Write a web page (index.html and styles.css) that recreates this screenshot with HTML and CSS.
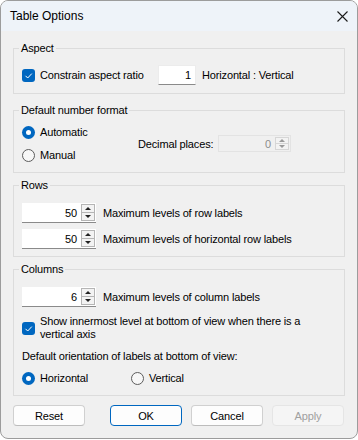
FILE: index.html
```html
<!DOCTYPE html>
<html lang="en">
<head>
    <meta charset="UTF-8">
    <title>Table Options</title>
    <link rel="stylesheet" href="styles.css">
</head>
<body>
    <div class="window">
        <div class="titlebar">
            <span class="title">Table Options</span>
            <svg class="close" width="11" height="11" viewBox="0 0 11 11">
                <path d="M0.5 0.5 L10.5 10.5 M10.5 0.5 L0.5 10.5" stroke="#1b1b1b" stroke-width="1.1" fill="none"/>
            </svg>
        </div>

        <div class="content">
            <!-- Aspect -->
            <fieldset class="group aspect">
                <legend>Aspect</legend>
                <div class="aspect-row">
                    <label class="check ratio-check">
                        <span class="box"><svg width="13" height="13" viewBox="0 0 13 13"><path d="M3.5 6.8 L5.7 9 L9.8 4.6" stroke="#fff" stroke-width="1" fill="none"/></svg></span>
                        Constrain aspect ratio
                    </label>
                    <span class="field ratio">1</span>
                    <span class="after">Horizontal : Vertical</span>
                </div>
            </fieldset>

            <!-- Default number format -->
            <fieldset class="group format">
                <legend>Default number format</legend>
                <div class="format-body">
                    <div class="radios">
                        <label class="radio"><span class="dot on"></span>Automatic</label>
                        <label class="radio"><span class="dot"></span>Manual</label>
                    </div>
                    <div class="decimal">
                        <span class="decimal-label">Decimal places:</span>
                        <span class="spin disabled">
                            <span class="value">0</span>
                            <span class="spinner">
                                <span class="arrow up"></span>
                                <span class="arrow down"></span>
                            </span>
                        </span>
                    </div>
                </div>
            </fieldset>

            <!-- Rows -->
            <fieldset class="group rows">
                <legend>Rows</legend>
                <div class="stack">
                    <div class="spin-row">
                        <span class="spin">
                            <span class="value">50</span>
                            <span class="spinner">
                                <span class="arrow up"></span>
                                <span class="arrow down"></span>
                            </span>
                        </span>
                        <span class="after">Maximum levels of row labels</span>
                    </div>
                    <div class="spin-row">
                        <span class="spin">
                            <span class="value">50</span>
                            <span class="spinner">
                                <span class="arrow up"></span>
                                <span class="arrow down"></span>
                            </span>
                        </span>
                        <span class="after">Maximum levels of horizontal row labels</span>
                    </div>
                </div>
            </fieldset>

            <!-- Columns -->
            <fieldset class="group columns">
                <legend>Columns</legend>
                <div class="spin-row">
                    <span class="spin">
                        <span class="value">6</span>
                        <span class="spinner">
                            <span class="arrow up"></span>
                            <span class="arrow down"></span>
                        </span>
                    </span>
                    <span class="after">Maximum levels of column labels</span>
                </div>
                <label class="check wrap-check">
                    <span class="box"><svg width="13" height="13" viewBox="0 0 13 13"><path d="M3.5 6.8 L5.7 9 L9.8 4.6" stroke="#fff" stroke-width="1" fill="none"/></svg></span>
                    <span class="wrap-text">Show innermost level at bottom of view when there is a<br>vertical axis</span>
                </label>
                <div class="orient-label">Default orientation of labels at bottom of view:</div>
                <div class="orient">
                    <label class="radio horiz"><span class="dot on"></span>Horizontal</label>
                    <label class="radio"><span class="dot"></span>Vertical</label>
                </div>
            </fieldset>

            <div class="buttons">
                <button class="btn">Reset</button>
                <span class="spacer"></span>
                <button class="btn default">OK</button>
                <button class="btn">Cancel</button>
                <button class="btn" disabled>Apply</button>
            </div>
        </div>
    </div>
</body>
</html>
```

FILE: styles.css
```css
body {
    margin: 0;
    background: #ffffff;
    font-family: "Liberation Sans", Arial, sans-serif;
    font-size: 11px;
    letter-spacing: -0.15px;
    color: #000;
}

.window {
    width: 358px;
    height: 439px;
    box-sizing: border-box;
    border: 1px solid #9c9c9c;
    border-radius: 8px;
    overflow: hidden;
    background: #f0f0f0;
}

.titlebar {
    height: 30px;
    background: #eef3f9;
    display: flex;
    align-items: center;
    justify-content: space-between;
    padding: 0 9px 0 9px;
}

.title {
    font-size: 12px;
    letter-spacing: 0;
}

.content {
    padding: 9px 12px 0;
}

/* group boxes */
.group {
    margin: 0;
    border: 1px solid #dcdcdc;
    padding: 0 8px 8px;
    min-width: 0;
}

.group legend {
    padding: 0 2px;
    margin-left: -3px;
    line-height: 16px;
}

.aspect {
    padding-top: 9px;
}

.format {
    margin-top: 8px;
    padding-top: 4px;
    padding-bottom: 7px;
}

.rows {
    margin-top: 4px;
    padding-top: 10px;
    padding-bottom: 7px;
}

.columns {
    margin-top: 4px;
    padding-top: 10px;
    padding-bottom: 7px;
}

/* checkboxes */
.check {
    display: flex;
    align-items: center;
}

.box {
    width: 13px;
    height: 13px;
    border-radius: 3px;
    background: #0067c0;
    margin-right: 5px;
    flex: none;
}

.box svg {
    display: block;
}

.aspect-row {
    display: flex;
    align-items: center;
    height: 20px;
}

.ratio-check {
    width: 136px;
}

.field {
    box-sizing: border-box;
    background: #fff;
    border: 1px solid #ececec;
    border-bottom-color: #8a8a8a;
}

.ratio {
    width: 38px;
    height: 20px;
    line-height: 18px;
    text-align: right;
    padding-right: 4px;
}

.after {
    margin-left: 6px;
}

/* radios */
.format-body {
    display: flex;
    align-items: center;
}

.radios {
    display: flex;
    flex-direction: column;
    gap: 3px;
    width: 116px;
}

.radio {
    display: flex;
    align-items: center;
    height: 20px;
}

.dot {
    width: 13px;
    height: 13px;
    box-sizing: border-box;
    border-radius: 50%;
    border: 1px solid #5c5c5c;
    background: #f7f7f7;
    margin-right: 5px;
    flex: none;
    display: flex;
    align-items: center;
    justify-content: center;
}

.dot.on {
    border: none;
    background: #0067c0;
}

.dot.on::after {
    content: "";
    width: 5px;
    height: 5px;
    border-radius: 50%;
    background: #fff;
}

.decimal {
    display: flex;
    align-items: center;
}

.decimal-label {
    width: 80px;
}

/* spin boxes */
.spin {
    box-sizing: border-box;
    width: 74px;
    height: 20px;
    display: flex;
    align-items: center;
    background: #fff;
    border-bottom: 1px solid #8a8a8a;
}

.spin .value {
    flex: 1;
    text-align: right;
    padding-right: 4px;
}

.spinner {
    width: 14px;
    height: 17px;
    display: flex;
    flex-direction: column;
    margin-right: 1px;
}

.arrow {
    flex: 1;
    box-sizing: border-box;
    border: 1px solid #b5b5b5;
    background: #f3f3f3;
    display: flex;
    align-items: center;
    justify-content: center;
}

.arrow.down {
    border-top: none;
}

.arrow::after {
    content: "";
    width: 0;
    height: 0;
    border-left: 3px solid transparent;
    border-right: 3px solid transparent;
}

.arrow.up::after {
    border-bottom: 3px solid #222;
}

.arrow.down::after {
    border-top: 3px solid #222;
}

.spin.disabled {
    width: 73px;
    height: 17px;
    background: #f0f0f0;
    border: 1px solid #e3e3e3;
    color: #8c8c8c;
}

.spin.disabled .spinner {
    height: 13px;
}

.spin.disabled .arrow {
    border-color: #d6d6d6;
}

.spin.disabled .arrow.up::after {
    border-bottom-color: #9a9a9a;
}

.spin.disabled .arrow.down::after {
    border-top-color: #9a9a9a;
}

.stack {
    display: flex;
    flex-direction: column;
    gap: 6px;
}

.spin-row {
    display: flex;
    align-items: center;
}

.spin-row .after {
    margin-left: 7px;
}

.wrap-check {
    margin-top: 8px;
}

.wrap-text {
    line-height: 13px;
}

.orient-label {
    margin-top: 8px;
    line-height: 14px;
}

.orient {
    display: flex;
    margin-top: 5px;
}

.horiz {
    width: 109px;
}

/* buttons */
.buttons {
    display: flex;
    gap: 9px;
    margin-top: 9px;
    padding-right: 1px;
}

.spacer {
    flex: 1;
}

.btn {
    width: 72px;
    height: 21px;
    box-sizing: border-box;
    background: #fdfdfd;
    border: 1px solid #d0d0d0;
    border-bottom-color: #bcbcbc;
    border-radius: 4px;
    font-family: inherit;
    font-size: 11px;
    letter-spacing: -0.15px;
    color: #000;
    padding: 0;
}

.btn.default {
    border: 1px solid #0067c0;
}

.btn:disabled {
    background: #f5f5f5;
    border-color: #e5e5e5;
    color: #a0a0a0;
}
```
